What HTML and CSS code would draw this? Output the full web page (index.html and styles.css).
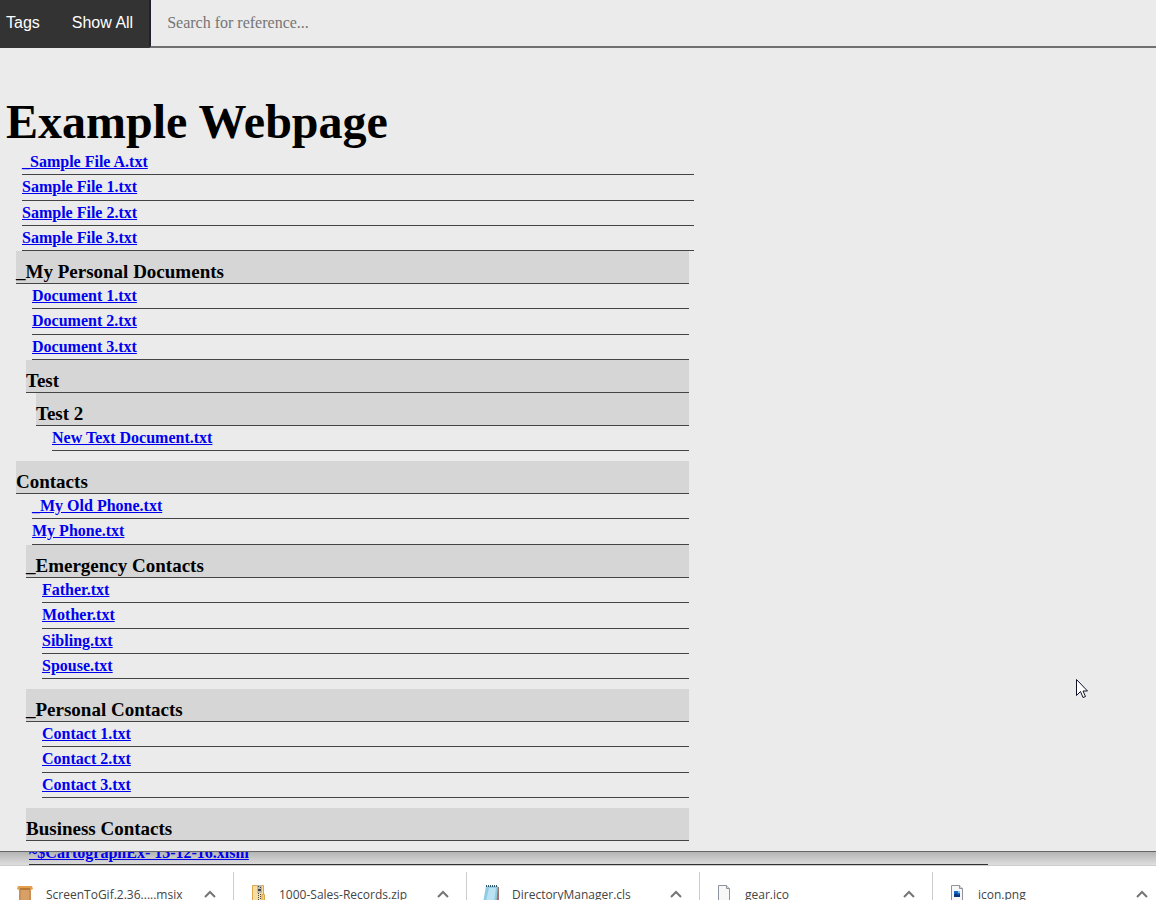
FILE: index.html
```html
<!DOCTYPE html>
<html lang="en">
<head>
<meta charset="utf-8">
<title>Example Webpage</title>
<link rel="stylesheet" href="styles.css">
</head>
<body>
<div class="window">
  <nav class="toolbar">
    <button class="tool tool-first" type="button">Tags</button>
    <button class="tool" type="button">Show All</button>
    <input class="search" type="text" aria-label="Search for reference" placeholder="Search for reference...">
  </nav>
  <main class="page">
    <h1 class="title">Example Webpage</h1>
    <ul class="files">
      <li><a href="#">_Sample File A.txt</a></li>
      <li><a href="#">Sample File 1.txt</a></li>
      <li><a href="#">Sample File 2.txt</a></li>
      <li><a href="#">Sample File 3.txt</a></li>
    </ul>
    <div class="tree">
      <section class="folder">
        <h2 class="folder-name">_My Personal Documents</h2>
        <ul class="files">
          <li><a href="#">Document 1.txt</a></li>
          <li><a href="#">Document 2.txt</a></li>
          <li><a href="#">Document 3.txt</a></li>
        </ul>
        <section class="folder">
          <h2 class="folder-name">Test</h2>
          <section class="folder">
            <h2 class="folder-name">Test 2</h2>
            <ul class="files">
              <li><a href="#">New Text Document.txt</a></li>
            </ul>
          </section>
        </section>
      </section>
      <section class="folder">
        <h2 class="folder-name">Contacts</h2>
        <ul class="files">
          <li><a href="#">_My Old Phone.txt</a></li>
          <li><a href="#">My Phone.txt</a></li>
        </ul>
        <section class="folder">
          <h2 class="folder-name">_Emergency Contacts</h2>
          <ul class="files">
            <li><a href="#">Father.txt</a></li>
            <li><a href="#">Mother.txt</a></li>
            <li><a href="#">Sibling.txt</a></li>
            <li><a href="#">Spouse.txt</a></li>
          </ul>
        </section>
        <section class="folder">
          <h2 class="folder-name">_Personal Contacts</h2>
          <ul class="files">
            <li><a href="#">Contact 1.txt</a></li>
            <li><a href="#">Contact 2.txt</a></li>
            <li><a href="#">Contact 3.txt</a></li>
          </ul>
        </section>
        <section class="folder">
          <h2 class="folder-name">Business Contacts</h2>
        </section>
      </section>
    </div>
  </main>
</div>
<div class="behind">
  <div class="behind-row"><a href="#">~$CartographEx- 13-12-16.xlsm</a></div>
</div>
<footer class="downloads">
  <div class="download">
    <svg class="file-icon" viewBox="0 0 16 18"><path d="M2 4h12v14H2z" fill="#c98f58"/><path d="M4 5h8v10H4z" fill="#d9a066"/><path d="M1 1h14l1 3-2 1H2L0 4z" fill="#e0a050"/><path d="M3 3h10v2H3z" fill="#b87836"/></svg>
    <span class="file-name">ScreenToGif.2.36.....msix</span>
    <button class="more" type="button" aria-label="More options"><svg viewBox="0 0 12 8"><path d="M1 7l5-5 5 5"/></svg></button>
  </div>
  <div class="download">
    <svg class="file-icon" viewBox="0 0 16 18"><path d="M2.500.5h11v18h-11z" fill="#f8dda0" stroke="#dba64b"/><path d="M12 9.500h2.500v9H12z" fill="#f3cf85" stroke="#dba64b"/><path d="M7 0h5v8H7z" fill="#b8b8b8"/><path d="M8 1h1v1H8zm2 1h1v1h-1zM8 4h3v2H8zM8 8h1v1H8zm2 1h1v1h-1zM8 10h1v1H8zm2 1h1v1h-1zM8 12h1v1H8zm2 1h1v1h-1zM8 14h1v1H8z" fill="#444"/></svg>
    <span class="file-name">1000-Sales-Records.zip</span>
    <button class="more" type="button" aria-label="More options"><svg viewBox="0 0 12 8"><path d="M1 7l5-5 5 5"/></svg></button>
  </div>
  <div class="download">
    <svg class="file-icon" viewBox="0 0 16 18"><path d="M14 2h2v16h-3z" fill="#9b7568"/><path d="M3 1h12l-2 17H0z" fill="#8fcbe5"/><path d="M6 3h7l-2 13H3z" fill="#b9e3f3"/><path d="M3 1h12" fill="none" stroke="#35576a" stroke-width="2" stroke-dasharray="1 1"/></svg>
    <span class="file-name">DirectoryManager.cls</span>
    <button class="more" type="button" aria-label="More options"><svg viewBox="0 0 12 8"><path d="M1 7l5-5 5 5"/></svg></button>
  </div>
  <div class="download">
    <svg class="file-icon" viewBox="0 0 16 18"><path d="M2.500.5h8l3 3v14h-11z" fill="#f7f7f7" stroke="#8d939c"/><path d="M10.500.5v3h3" fill="#dfe3e8" stroke="#8d939c"/></svg>
    <span class="file-name">gear.ico</span>
    <button class="more" type="button" aria-label="More options"><svg viewBox="0 0 12 8"><path d="M1 7l5-5 5 5"/></svg></button>
  </div>
  <div class="download">
    <svg class="file-icon" viewBox="0 0 16 18"><path d="M2.500.5h8l3 3v14h-11z" fill="#f7f7f7" stroke="#8d939c"/><path d="M10.500.5v3h3" fill="#dfe3e8" stroke="#8d939c"/><path d="M5 6h6v6H5z" fill="#1767c5"/><path d="M5 10l2-2 2 2 2-1v3H5z" fill="#0b347c"/><path d="M9 6h2v2H9z" fill="#7fc4f5"/></svg>
    <span class="file-name">icon.png</span>
    <button class="more" type="button" aria-label="More options"><svg viewBox="0 0 12 8"><path d="M1 7l5-5 5 5"/></svg></button>
  </div>
</footer>
<svg class="pointer" viewBox="0 0 12 20"><path d="M.5.5v16l4-4 2.500 6 2.500-1-2.500-5.500h4.500z" fill="#fff" stroke="#101028"/></svg>
</body>
</html>
```
FILE: styles.css
```css
* {
  box-sizing: border-box;
}

body {
  margin: 0;
  height: 100vh;
  display: flex;
  flex-direction: column;
  overflow: hidden;
  background: #ebebeb;
  color: #000;
  font-family: "Liberation Serif", "Times New Roman", serif;
  font-size: 16px;
}

a {
  color: #0000ee;
  font-weight: bold;
}

.window {
  flex: 1;
  min-height: 0;
  overflow: hidden;
  border-bottom: 1px solid #666;
}

.toolbar {
  display: flex;
  height: 48px;
}

.tool {
  border: 0;
  padding: 0 16px 2px;
  background: #333;
  color: #fff;
  font: 16px "Liberation Sans", Arial, sans-serif;
}

.tool-first {
  padding-left: 6px;
}

.search {
  flex: 1;
  min-width: 0;
  border: 0;
  border-left: 2px solid #202030;
  border-bottom: 2px solid #707070;
  border-radius: 0;
  padding: 0 16px;
  background: #ebebeb;
  font: 16px "Liberation Serif", "Times New Roman", serif;
}

.search::placeholder {
  color: #757575;
}

.page {
  width: 60%;
  padding: 48px 0 0 6px;
}

.title {
  margin: 0 0 2px;
  font-size: 48px;
  line-height: 52px;
}

.files {
  list-style: none;
  margin: 0 0 0 16px;
  padding: 0;
}

.files li {
  height: 25px;
  border-bottom: 1px solid #444;
  line-height: 24px;
}

.files li:nth-child(2) {
  height: 26px;
}

.tree {
  margin-right: 5px;
}

.folder {
  margin: 0 0 10px 10px;
}

.folder-name {
  margin: 0;
  height: 33px;
  padding-top: 10px;
  border-bottom: 1px solid #444;
  background: #d6d6d6;
  font-size: 19px;
  line-height: 22px;
}

.behind {
  height: 14px;
  overflow: hidden;
  display: flex;
  flex-direction: column;
  justify-content: flex-end;
  background: linear-gradient(#b4b4b4, #dedede);
  border-bottom: 1px solid #ccc;
}

.behind-row {
  width: 83%;
  margin-left: 29px;
  border-bottom: 1px solid #333;
  line-height: 22px;
}

.downloads {
  height: 34px;
  display: flex;
  overflow: hidden;
  padding-top: 6px;
  background: #fff;
}

.download {
  flex: 0 0 233px;
  height: 44px;
  display: flex;
  align-items: center;
  padding: 0 17px;
  color: #444;
  font: 12px "Open Sans", "Noto Sans", sans-serif;
}

.download + .download {
  padding-left: 16px;
  border-left: 1px solid #ccc;
}

.file-icon {
  flex: none;
  width: 16px;
  height: 18px;
  margin-right: 13px;
}

.file-name {
  flex: 1;
  white-space: nowrap;
}

.more {
  display: flex;
  border: 0;
  padding: 0;
  background: none;
}

.more svg {
  width: 12px;
  height: 8px;
  fill: none;
  stroke: #757575;
  stroke-width: 2;
}

.pointer {
  position: absolute;
  left: 1076px;
  top: 679px;
  width: 12px;
  height: 20px;
}
```
